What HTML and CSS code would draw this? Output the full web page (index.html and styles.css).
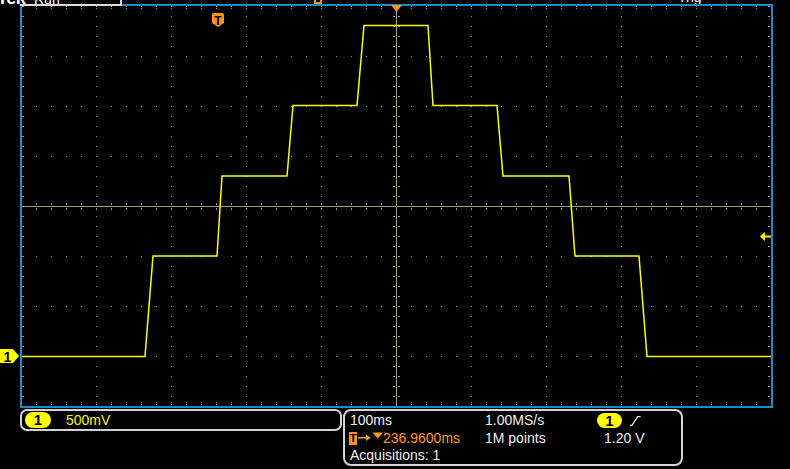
FILE: index.html
```html
<!DOCTYPE html>
<html>
<head>
<meta charset="utf-8">
<link rel="stylesheet" href="styles.css">
</head>
<body>
<div class="scope">
  <div class="topbar">
    <span class="logo">Tek</span>
    <span class="status"><span class="run">Run</span></span>
    <span class="record"><span class="record-marker"></span></span>
    <span class="trig">Trig</span>
  </div>
  <svg class="graticule" width="790" height="405" viewBox="0 4 790 405">
    <g class="grid" stroke="#9a9a9a" stroke-width="1" fill="none">
      <path d="M96.5 6V406M171.5 6V406M246.5 6V406M321.5 6V406M471.5 6V406M546.5 6V406M621.5 6V406M696.5 6V406" stroke-dasharray="1 9"/>
      <path d="M21 56.5H771M21 106.5H771M21 156.5H771M21 256.5H771M21 306.5H771M21 356.5H771" stroke-dasharray="1 14"/>
      <path d="M21 6.5H771M21 8.5H771M21 402.5H771M21 404.5H771" stroke-dasharray="1 14"/>
      <path d="M22.5 6V406M23.5 6V406M768.5 6V406M769.5 6V406" stroke-dasharray="1 9"/>
      <path d="M393.5 6V406M394.5 6V406M398.5 6V406M399.5 6V406" stroke-dasharray="1 9"/>
      <path d="M21 203.5H771M21 204.5H771M21 208.5H771M21 209.5H771" stroke-dasharray="1 14"/>
      <path d="M21 206.5H771M396.5 6V406" stroke="#a39c78"/>
      <rect x="20" y="6" width="2" height="402" fill="#2089c9" stroke="none"/>
      <rect x="771" y="4" width="2" height="404" fill="#2089c9" stroke="none"/>
      <rect x="20" y="406" width="753" height="2" fill="#2089c9" stroke="none"/>
      <rect x="122" y="4" width="651" height="2" fill="#2089c9" stroke="none"/>
      <rect x="20" y="4" width="102" height="2" fill="#dcdcdc" stroke="none"/>
    </g>
    <polyline class="trace" fill="none" stroke="#ffff00" stroke-width="1.5" points="22,356.5 145,356.5 153,256 217,256 222,176 287,176 293,105.5 357,105.5 364,25.5 428,25.5 433,105.5 497,105.5 503,176 569,176 575,256 639,256 647,356.5 771,356.5"/>
    <polygon points="391,5 402,5 396.5,12" fill="#f8941f"/>
    <path d="M212 15Q212 13 214 13H222Q224 13 224 15V23L218 27L212 23Z" fill="#f8941f"/>
    <text x="218" y="25" class="tmark">T</text>
    <path d="M0 349H13L19 356L13 363H0Z" fill="#ffff00"/>
    <text x="7.5" y="361.5" class="chmark">1</text>
    <path d="M760 236.5L765 232V235.5H771V237.5H765V241Z" fill="#ffff00"/>
  </svg>
  <div class="readouts">
    <div class="box ch-box">
      <span class="pill">1</span>
      <span class="ch-scale">500mV</span>
    </div>
    <div class="box timebase">
      <span>100ms</span>
      <span>1.00MS/s</span>
      <span class="trig-src"><span class="pill pill-sm">1</span><svg class="edge" width="11" height="10" viewBox="0 0 11 10"><polyline points="0,9.4 2,9.4 7.6,0.6 10.6,0.6" fill="none" stroke="#eeeeee" stroke-width="1.2"/></svg></span>
      <span class="delay"><span class="tbox">T</span><svg class="delay-icon" width="26" height="14" viewBox="0 0 26 14"><path d="M1 6.75H10" stroke="#ff9a1f" stroke-width="1.5"/><path d="M9 3.5L13.7 6.75L9 10Z" fill="#ff9a1f"/><path d="M15.5 1.5H26L20.75 7.5Z" fill="#ff9a1f"/></svg><span class="delay-val">236.9600ms</span></span>
      <span>1M points</span>
      <span class="level">1.20 V</span>
      <span class="acq">Acquisitions: 1</span>
    </div>
  </div>
</div>
</body>
</html>
```

FILE: styles.css
```css
* {
  box-sizing: border-box;
}

html,
body {
  margin: 0;
  padding: 0;
  background: #000;
}

body {
  width: 790px;
  height: 469px;
  overflow: hidden;
  font-family: "Liberation Sans", Arial, sans-serif;
  color: #eeeeee;
}

.scope {
  display: flex;
  flex-direction: column;
}

/* top status strip (mostly cut off) */
.topbar {
  height: 4px;
  overflow: hidden;
  display: flex;
  align-items: flex-end;
  color: #ffffff;
}

.logo {
  width: 33px;
  margin-left: -3px;
  margin-right: 3px;
  font-weight: bold;
  font-size: 18px;
  line-height: 18px;
  margin-bottom: -3px;
  letter-spacing: -0.5px;
}

.status {
  align-self: stretch;
  width: 89px;
  border-right: 2px solid #dcdcdc;
  display: flex;
  align-items: flex-end;
  padding-left: 1px;
}

.run {
  font-size: 14px;
  line-height: 14px;
  margin-bottom: -2px;
}

.record {
  align-self: stretch;
  width: 548px;
  display: flex;
}

.record-marker {
  margin-left: 192px;
  width: 8px;
  border: 2px solid #f8941f;
  border-top: 0;
  background: #000;
}

.trig {
  padding-left: 8px;
  font-size: 14px;
  line-height: 14px;
}

/* graticule */
.graticule {
  display: block;
}

.grid {
  shape-rendering: crispEdges;
}

.tmark {
  font-family: "Liberation Sans", Arial, sans-serif;
  font-weight: bold;
  font-size: 12px;
  fill: #000;
  text-anchor: middle;
}

.chmark {
  font-family: "Liberation Sans", Arial, sans-serif;
  font-weight: bold;
  font-size: 14px;
  fill: #000;
  text-anchor: middle;
}

/* readouts */
.readouts {
  display: flex;
  align-items: flex-start;
  padding-left: 20px;
  gap: 1px;
}

.box {
  border: 2px solid #d4d4d4;
}

.ch-box {
  width: 322px;
  height: 22px;
  border-radius: 7px;
  display: flex;
  align-items: center;
  padding-left: 3px;
}

.pill {
  display: block;
  width: 26px;
  height: 16px;
  border-radius: 8px;
  background: #ffff00;
  color: #000;
  font-weight: bold;
  font-size: 15px;
  line-height: 16px;
  text-align: center;
}

.pill-sm {
  width: 25px;
  height: 15px;
  line-height: 15px;
}

.ch-scale {
  margin-left: 15px;
  color: #f7f700;
  font-size: 14px;
}

.timebase {
  width: 340px;
  height: 57px;
  border-radius: 8px;
  padding: 1px 0 0 5px;
  display: grid;
  grid-template-columns: 135px 112px auto;
  grid-auto-rows: 17.5px;
  align-items: center;
  font-size: 14px;
  line-height: 17.5px;
  color: #f0f0f0;
}

.trig-src {
  display: flex;
  align-items: center;
  gap: 8px;
}

.edge {
  display: block;
}

.delay {
  display: flex;
  align-items: center;
  margin-left: -1px;
  color: #ff9a1f;
}

.tbox {
  display: block;
  width: 8px;
  height: 13px;
  background: #f8941f;
  color: #000;
  font-weight: bold;
  font-size: 11px;
  line-height: 13px;
  text-align: center;
}

.delay-icon {
  display: block;
}

.level {
  margin-left: 7px;
}

.acq {
  grid-column: 1 / -1;
}
```
